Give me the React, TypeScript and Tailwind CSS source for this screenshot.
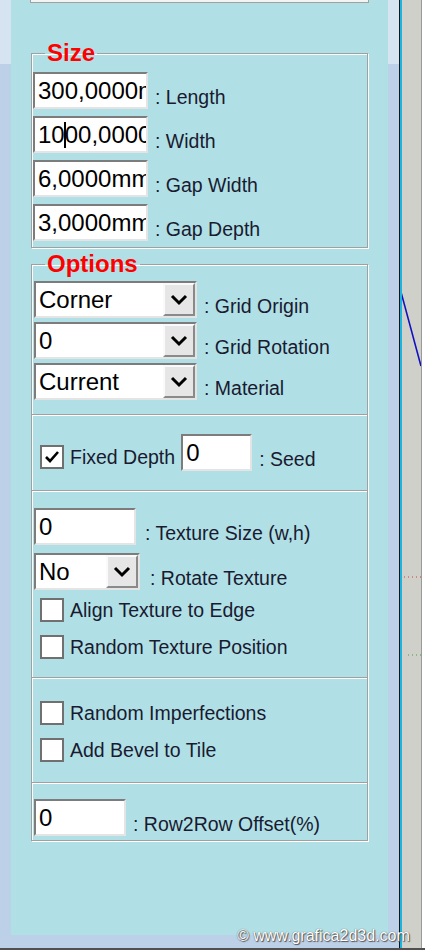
import React from "react";

const sunken =
  "border-2 border-t-[#7c7c7c] border-l-[#7c7c7c] border-b-[#e4e4e4] border-r-[#e4e4e4] bg-white";

function TextBox({ w, value, caret }: { w: string; value: string; caret?: number }) {
  return (
    <div className={`${w} h-[37px] ${sunken} flex items-center overflow-hidden whitespace-nowrap pl-[3px] text-[24px] leading-none text-black`}>
      {caret !== undefined ? (
        <>
          <span>{value.slice(0, caret)}</span>
          <div className="w-[2px] h-[26px] bg-[#000000] shrink-0 -ml-[1px] -mr-[1px] relative z-10" />
          <span>{value.slice(caret)}</span>
        </>
      ) : (
        value
      )}
    </div>
  );
}

function Select({ w, value }: { w: string; value: string }) {
  return (
    <div className={`${w} h-[37px] ${sunken} flex items-stretch overflow-hidden`}>
      <div className="flex-1 flex items-center pl-[3px] text-[24px] leading-none text-black whitespace-nowrap overflow-hidden">
        {value}
      </div>
      <div className="w-[32px] bg-[#e6e6e6] border-2 border-t-[#fafafa] border-l-[#fafafa] border-b-[#8a8a8a] border-r-[#8a8a8a] flex items-center justify-center">
        <svg width="18" height="12" viewBox="0 0 18 12">
          <polyline points="2,2 9,9 16,2" fill="none" stroke="#000" strokeWidth="3" />
        </svg>
      </div>
    </div>
  );
}

function Label({ children }: { children: React.ReactNode }) {
  return <span className="ml-[7px] mt-[14px] text-[19.5px] leading-none text-[#1a1a30] whitespace-nowrap">{children}</span>;
}

function Check({ checked, label }: { checked?: boolean; label: string }) {
  return (
    <div className="flex items-center h-[24px] pl-[8px]">
      <div className="w-[24px] h-[24px] bg-white border-2 border-[#707070] flex items-center justify-center">
        {checked && (
          <svg width="16" height="16" viewBox="0 0 16 16">
            <polyline points="2,8 6,12 14,3" fill="none" stroke="#000" strokeWidth="2.6" />
          </svg>
        )}
      </div>
      <span className="ml-[6px] mt-[2px] text-[19.5px] leading-none text-[#1a1a30] whitespace-nowrap">{label}</span>
    </div>
  );
}

function Sep() {
  return <div className="h-[2px] border-t border-t-[#a0a0a0] border-b border-b-white" />;
}

const fieldset =
  "w-[337px] border border-[#a0a0a0] shadow-[1px_1px_0_#ffffff,inset_1px_1px_0_#ffffff]";

export default function App() {
  return (
    <div className="relative w-[425px] h-[952px] overflow-hidden bg-white font-['Liberation_Sans',Arial,sans-serif]">
      <div className="flex h-[948px]">
        <div className="w-[11px] flex flex-col">
          <div className="h-[64px] bg-[#d6e4f1]" />
          <div className="flex-1 bg-[#bcd0e7]" />
        </div>
        <div className="w-[377px] flex flex-col bg-[#bcd0e7]">
          <div className="h-[935px] bg-[#b0e0e6] pl-[19px] flex flex-col">
            <div className="w-[339px] h-[3px] border-x border-b border-[#a0a0a0] bg-[#f4f4f4]" />
            <fieldset className={`${fieldset} mt-[38px] ml-[1px] pt-[7px] pb-[6px]`}>
              <legend className="ml-[13px] px-[2px] text-[24px] leading-[24px] font-bold text-[#ff0000]">Size</legend>
              <div className="flex flex-col gap-[7px] pl-[1px]">
                <div className="flex items-center">
                  <TextBox w="w-[115px]" value="300,0000mm" />
                  <Label>: Length</Label>
                </div>
                <div className="flex items-center">
                  <TextBox w="w-[115px]" value="1000,0000" caret={2} />
                  <Label>: Width</Label>
                </div>
                <div className="flex items-center">
                  <TextBox w="w-[115px]" value="6,0000mm" />
                  <Label>: Gap Width</Label>
                </div>
                <div className="flex items-center">
                  <TextBox w="w-[115px]" value="3,0000mm" />
                  <Label>: Gap Depth</Label>
                </div>
              </div>
            </fieldset>
            <fieldset className={`${fieldset} mt-[4px] ml-[1px] pt-[5px] pb-[4px]`}>
              <legend className="ml-[13px] px-[2px] text-[24px] leading-[24px] font-bold text-[#ff0000]">Options</legend>
              <div className="flex flex-col gap-[4px] pl-[2px]">
                <div className="flex items-center">
                  <Select w="w-[163px]" value="Corner" />
                  <Label>: Grid Origin</Label>
                </div>
                <div className="flex items-center">
                  <Select w="w-[163px]" value="0" />
                  <Label>: Grid Rotation</Label>
                </div>
                <div className="flex items-center">
                  <Select w="w-[163px]" value="Current" />
                  <Label>: Material</Label>
                </div>
              </div>
              <div className="mt-[14px]"><Sep /></div>
              <div className="mt-[18px] flex items-center h-[37px]">
                <div className="mt-[8px]"><Check checked label="Fixed Depth" /></div>
                <div className="ml-[6px]"><TextBox w="w-[71px]" value="0" /></div>
                <Label>: Seed</Label>
              </div>
              <div className="mt-[19px]"><Sep /></div>
              <div className="mt-[16px] flex items-center pl-[2px]">
                <TextBox w="w-[102px]" value="0" />
                <span className="ml-[9px] mt-[14px] text-[19.5px] leading-none text-[#1a1a30] whitespace-nowrap">: Texture Size (w,h)</span>
              </div>
              <div className="mt-[8px] flex items-center pl-[2px]">
                <Select w="w-[106px]" value="No" />
                <span className="ml-[10px] mt-[14px] text-[19.5px] leading-none text-[#1a1a30] whitespace-nowrap">: Rotate Texture</span>
              </div>
              <div className="mt-[8px]"><Check label="Align Texture to Edge" /></div>
              <div className="mt-[13px]"><Check label="Random Texture Position" /></div>
              <div className="mt-[18px]"><Sep /></div>
              <div className="mt-[22px]"><Check label="Random Imperfections" /></div>
              <div className="mt-[13px]"><Check label="Add Bevel to Tile" /></div>
              <div className="mt-[20px]"><Sep /></div>
              <div className="mt-[15px] flex items-center pl-[2px]">
                <TextBox w="w-[92px]" value="0" />
                <Label>: Row2Row Offset(%)</Label>
              </div>
            </fieldset>
          </div>
        </div>
        <div className="w-[11px] flex flex-col">
          <div className="h-[64px] bg-[#d6e4f1]" />
          <div className="flex-1 bg-[#bcd0e7]" />
        </div>
        <div className="w-px bg-[#101010]" />
        <div className="w-[2px] bg-[#19b5e0]" />
        <div className="relative w-[19px] bg-[#d0d0ca]">
          <svg className="absolute left-0 top-0" width="19" height="948" viewBox="0 0 19 948">
            <line x1="-1" y1="292" x2="19" y2="366" stroke="#1010c0" strokeWidth="1.6" />
            <line x1="2" y1="577" x2="19" y2="577" stroke="#d04040" strokeWidth="1" strokeDasharray="1 3" />
            <line x1="6" y1="655" x2="19" y2="655" stroke="#40a040" strokeWidth="1" strokeDasharray="1 3" />
          </svg>
        </div>
        <div className="w-px bg-[#9a9a9a]" />
        <div className="w-[3px] bg-white" />
      </div>
      <div className="h-[2px] bg-[#505050]" />
      <div className="h-[2px] bg-white" />
      <div className="absolute left-[237px] top-[927px] text-[16px] leading-[18px] text-white whitespace-nowrap [text-shadow:0_0_1px_#444,1px_1px_1px_#555]">
        © www.grafica2d3d.com
      </div>
    </div>
  );
}
